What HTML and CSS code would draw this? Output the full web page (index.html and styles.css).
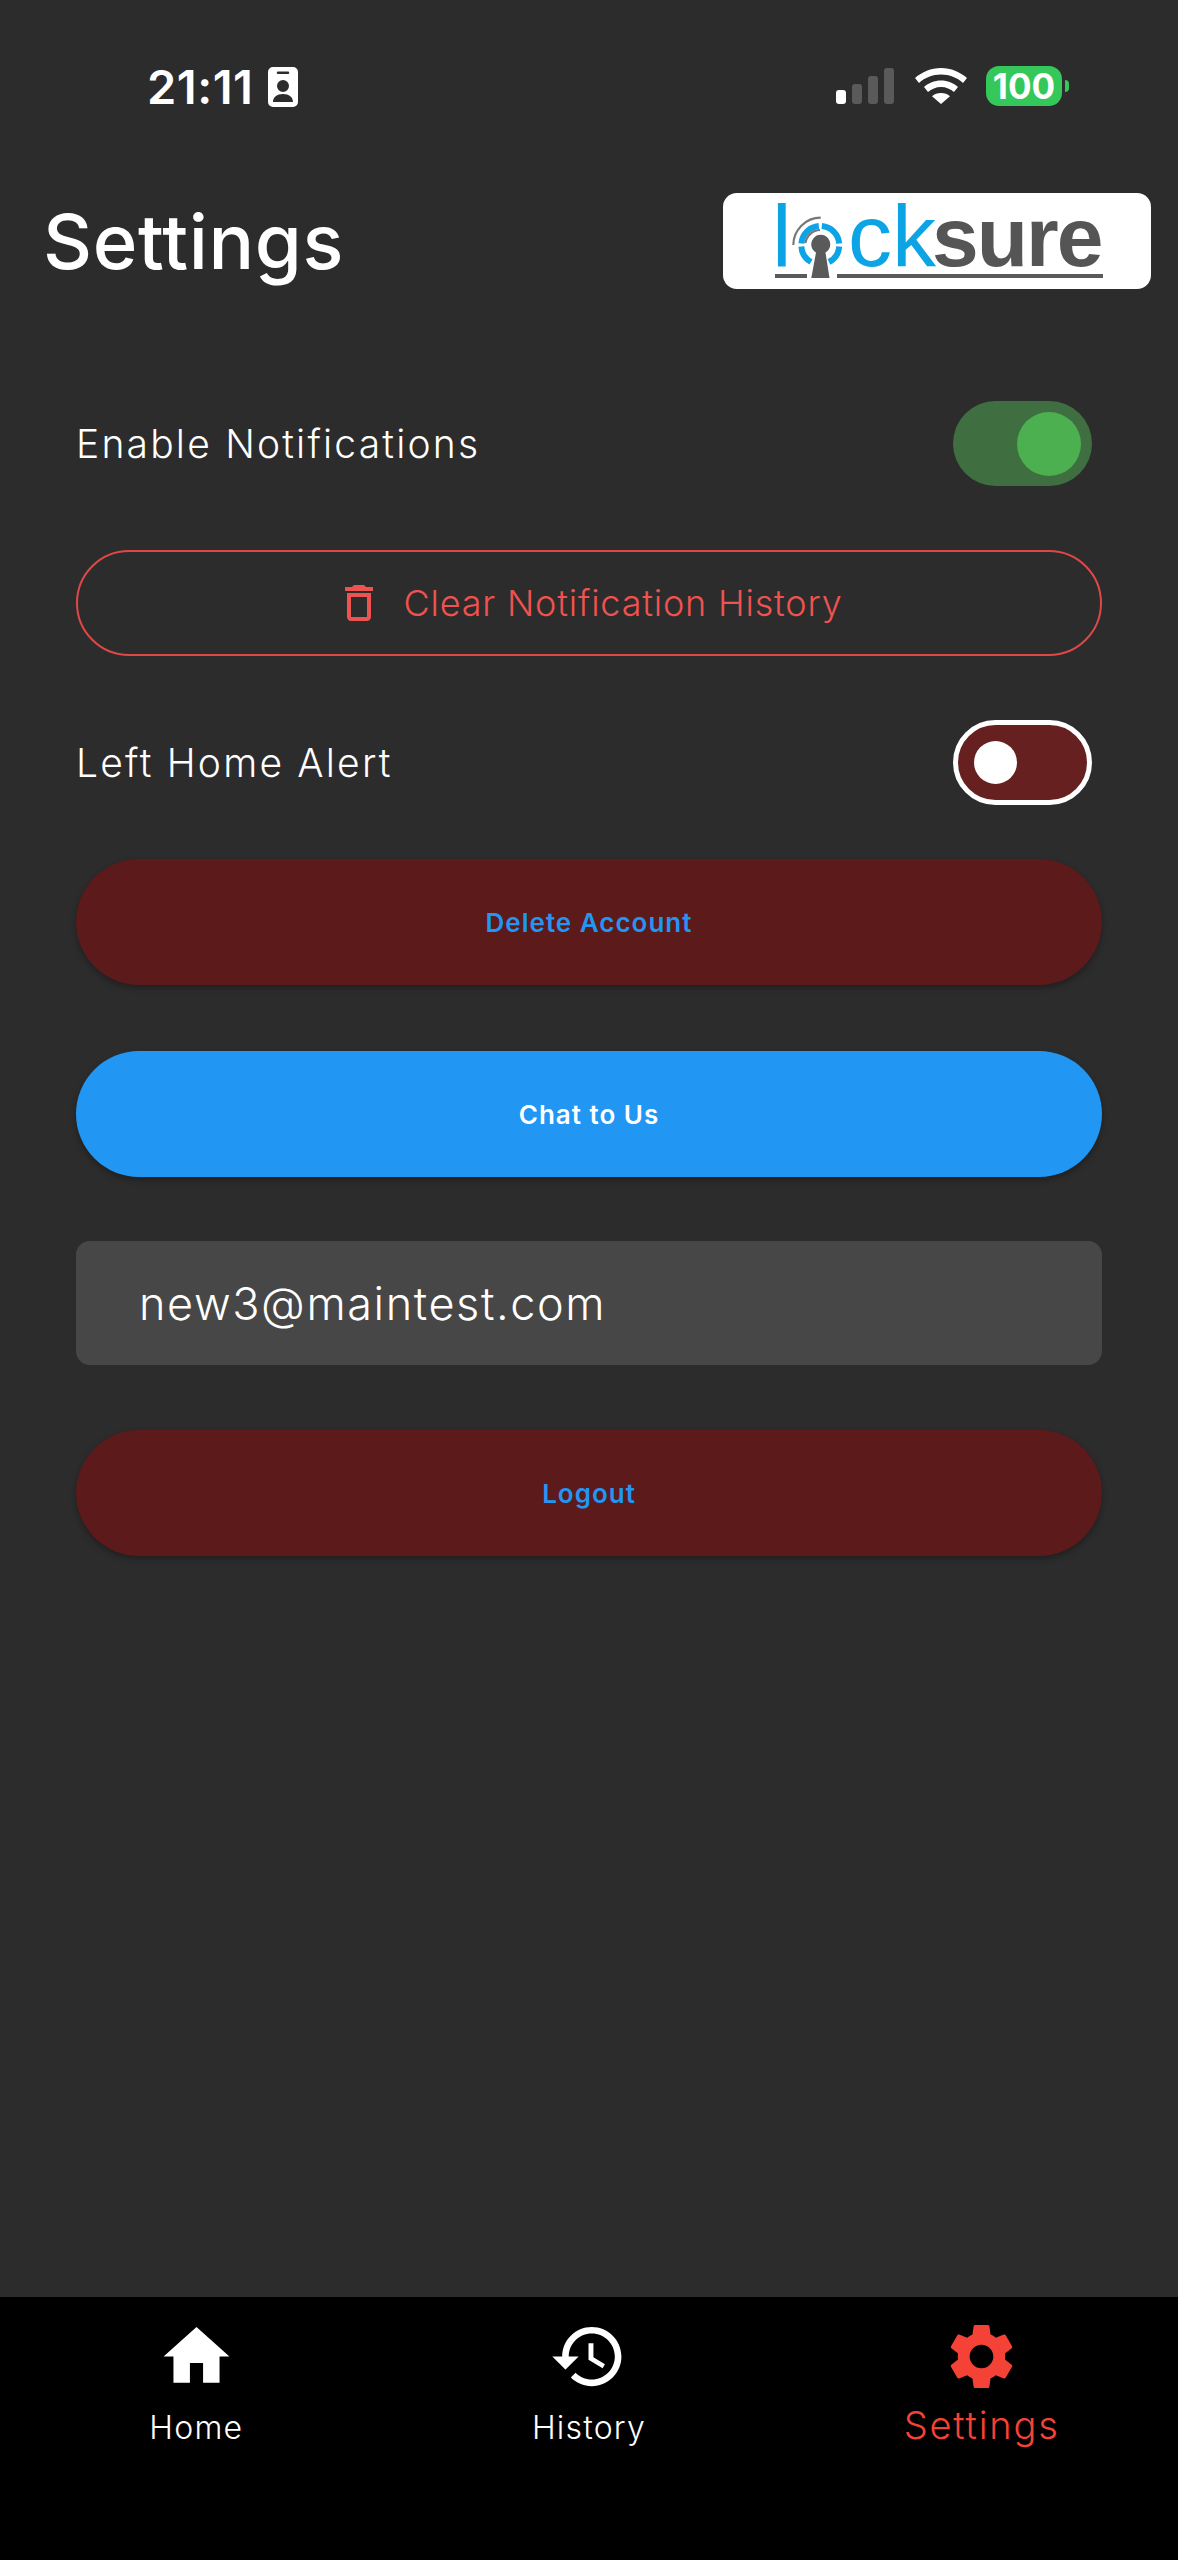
FILE: index.html
```html
<!DOCTYPE html>
<html>
	<head>
		<meta charset="utf-8">
		<meta name="viewport" content="width=device-width">
		<title>Settings</title>
		<link rel="stylesheet" href="styles.css">
	</head>
	<body>
		<div class="status">
			<div class="status_left">
				<span class="time">21:11</span>
				<svg class="badge" viewBox="0 0 30 40"><path fill="#FFF" fill-rule="evenodd" d="M5 0h20a5 5 0 0 1 5 5v30a5 5 0 0 1-5 5H5a5 5 0 0 1-5-5V5a5 5 0 0 1 5-5zM10 4.500a1 1 0 0 0 0 2.500h10a1 1 0 0 0 0-2.500zM15 13a6 6 0 1 0 0 12a6 6 0 0 0 0-12zM5 35h20c0-5-4-8-10-8s-10 3-10 8z"/></svg>
			</div>
			<div class="status_right">
				<div class="signal">
					<span class="bar bar1"></span><span class="bar bar2"></span><span class="bar bar3"></span><span class="bar bar4"></span>
				</div>
				<svg class="wifi" viewBox="0 0 52 36"><path fill="#FFF" d="M26 0c10 0 19 4 26 10l-4 5C42 9.500 34.500 6.500 26 6.500S10 9.500 4 15l-4-5C7 4 16 0 26 0zM26 12.500c6.500 0 12.500 2.500 17 6.500l-4 5c-3.500-3-8-5-13-5s-9.500 2-13 5l-4-5c4.500-4 10.500-6.500 17-6.500zM26 25c3.500 0 6.500 1.200 9 3.200L26 36l-9-7.800c2.500-2 5.500-3.200 9-3.200z"/></svg>
				<div class="battery"><span class="battery_level">100</span><span class="battery_nub"></span></div>
			</div>
		</div>

		<div class="header">
			<h1 class="title">Settings</h1>
			<div class="logo">
				<svg viewBox="0 0 428 96" width="428" height="96">
					<text class="logo_blue" x="49" y="73">l</text>
					<text class="logo_blue" x="125" y="73">ck</text>
					<text class="logo_grey" x="209" y="73">sure</text>
					<rect x="52" y="81" width="32" height="4" fill="#5A5A5A"/>
					<rect x="114" y="81" width="266" height="4" fill="#5A5A5A"/>
					<g fill="none" stroke="#0CA4E4" stroke-width="6">
						<path d="M78.400 50.500A19 19 0 0 1 95.800 33.100"/>
						<path d="M98.800 33.100A19 19 0 0 1 116.200 50.500"/>
						<path d="M116.200 53.500A19 19 0 0 1 106 69"/>
						<path d="M78.400 53.500A19 19 0 0 0 88 69"/>
					</g>
					<g fill="none" stroke="#777" stroke-width="2.200">
						<path d="M70.300 52A27.500 27.500 0 0 1 97.700 24.700"/>
						<path d="M82.500 50A15 15 0 0 1 97 37"/>
					</g>
					<path fill="#5A5A5A" d="M88.300 85L93 59.500A9.500 9.500 0 1 1 102.500 59.500L106.500 85z"/>
				</svg>
			</div>
		</div>

		<div class="content">
			<div class="row">
				<span class="row_label">Enable Notifications</span>
				<div class="toggle toggle_on"><span class="knob"></span></div>
			</div>
			<div class="btn_clear">
				<svg class="trash" viewBox="0 0 24 24"><path fill="#EF5350" d="M6 19c0 1.100.9 2 2 2h8c1.100 0 2-.9 2-2V7H6v12zM8 9h8v10H8V9zm7.500-5l-1-1h-5l-1 1H5v2h14V4z"/></svg>
				<span>Clear Notification History</span>
			</div>
			<div class="row">
				<span class="row_label">Left Home Alert</span>
				<div class="toggle toggle_off"><span class="knob"></span></div>
			</div>
			<div class="btn btn_red btn_delete">Delete Account</div>
			<div class="btn btn_blue">Chat to Us</div>
			<div class="email">new3@maintest.com</div>
			<div class="btn btn_red btn_logout">Logout</div>
		</div>

		<div class="nav">
			<div class="nav_item">
				<svg class="nav_icon" viewBox="0 0 24 24"><path fill="#FFF" d="M10 20v-6h4v6h5v-8h3L12 3 2 12h3v8z"/></svg>
				<span>Home</span>
			</div>
			<div class="nav_item">
				<svg class="nav_icon" viewBox="0 0 24 24"><path fill="#FFF" d="M13 3c-4.970 0-9 4.030-9 9H1l3.890 3.890.07.14L9 12H6c0-3.870 3.130-7 7-7s7 3.130 7 7-3.130 7-7 7c-1.930 0-3.680-.79-4.940-2.060l-1.420 1.420C8.270 19.990 10.510 21 13 21c4.970 0 9-4.030 9-9s-4.030-9-9-9zm-1 5v5l4.280 2.540.72-1.210-3.500-2.080V8H12z"/></svg>
				<span>History</span>
			</div>
			<div class="nav_item nav_active">
				<svg class="nav_icon" viewBox="0 0 24 24"><path fill="#F44336" d="M19.140 12.940c.04-.3.06-.61.06-.94 0-.32-.02-.64-.07-.94l2.030-1.580c.18-.14.23-.41.12-.61l-1.920-3.320c-.12-.22-.37-.29-.59-.22l-2.390.96c-.5-.38-1.030-.7-1.620-.94l-.36-2.540c-.04-.24-.24-.41-.48-.41h-3.840c-.24 0-.43.17-.47.41l-.36 2.540c-.59.24-1.130.57-1.620.94l-2.390-.96c-.22-.08-.47 0-.59.22L2.740 8.870c-.12.21-.08.47.12.61l2.030 1.580c-.05.3-.09.63-.09.94s.02.64.07.94l-2.030 1.580c-.18.14-.23.41-.12.61l1.920 3.320c.12.22.37.29.59.22l2.390-.96c.5.38 1.030.7 1.620.94l.36 2.540c.05.24.24.41.48.41h3.840c.24 0 .44-.17.47-.41l.36-2.540c.59-.24 1.130-.56 1.620-.94l2.390.96c.22.08.47 0 .59-.22l1.920-3.320c.12-.22.07-.47-.12-.61l-2.010-1.580zM12 15.600c-1.980 0-3.600-1.620-3.600-3.600s1.620-3.600 3.600-3.600 3.600 1.620 3.600 3.600-1.620 3.600-3.600 3.600z"/></svg>
				<span>Settings</span>
			</div>
		</div>
	</body>
</html>
```
FILE: styles.css
```css
*{
	box-sizing:border-box;
}

body{
	margin:0;
	height:2560px;
	display:flex;
	flex-direction:column;
	background:#2C2C2C;
	color:#FFF;
	font-family:"Inter",sans-serif;
}

/* status bar */
.status{
	height:130px;
	padding:58px 109px 0 147px;
	display:flex;
	justify-content:space-between;
	align-items:flex-start;
}

.status_left{
	display:flex;
	align-items:center;
	height:60px;
	margin-top:-1px;
}

.time{
	font-size:47px;
	font-weight:600;
	letter-spacing:.5px;
	line-height:60px;
	width:121px;
}

.badge{
	width:30px;
	height:40px;
}

.status_right{
	display:flex;
	align-items:center;
	height:60px;
	margin-top:-2px;
}

.signal{
	display:flex;
	align-items:flex-end;
	gap:6px;
	height:36px;
	width:79px;
}

.bar{
	width:10px;
	border-radius:3px;
	background:#5A5A5A;
}

.bar1{
	height:14px;
	background:#FFF;
}

.bar2{
	height:20px;
}

.bar3{
	height:28px;
}

.bar4{
	height:36px;
}

.wifi{
	width:52px;
	height:36px;
	margin-right:19px;
}

.battery{
	display:flex;
	align-items:center;
}

.battery_level{
	width:76px;
	height:40px;
	border-radius:13px;
	background:#34C759;
	font-size:35px;
	font-weight:700;
	line-height:40px;
	text-align:center;
}

.battery_nub{
	width:4px;
	height:12px;
	margin-left:3px;
	border-radius:0 4px 4px 0;
	background:#34C759;
}

/* header */
.header{
	margin-top:63px;
	height:96px;
	padding:0 27px 0 43px;
	display:flex;
	justify-content:space-between;
	align-items:center;
}

.title{
	margin:0;
	font-size:76px;
	font-weight:500;
	letter-spacing:.6px;
}

.logo{
	width:428px;
	height:96px;
	border-radius:14px;
	background:#FFF;
}

.logo svg{
	display:block;
	overflow:visible;
}

.logo_blue{
	font-family:"Liberation Sans",sans-serif;
	font-size:88px;
	fill:#0CA4E4;
}

.logo_grey{
	font-family:"Liberation Sans",sans-serif;
	font-size:84px;
	font-weight:700;
	letter-spacing:-2px;
	fill:#555;
}

/* settings */
.content{
	margin-top:112px;
	padding:0 76px;
	display:flex;
	flex-direction:column;
	gap:64px;
}

.row{
	display:flex;
	justify-content:space-between;
	align-items:center;
	height:85px;
	padding-right:10px;
}

.row_label{
	font-size:39px;
	font-weight:300;
	letter-spacing:2.200px;
}

.toggle{
	width:139px;
	height:85px;
	border-radius:43px;
	display:flex;
	align-items:center;
}

.toggle_on{
	background:#3F6F40;
	justify-content:flex-end;
	padding-right:11px;
}

.toggle_on .knob{
	width:64px;
	height:64px;
	border-radius:50%;
	background:#4CAF50;
}

.toggle_off{
	background:#662020;
	border:5px solid #FFF;
	padding-left:16px;
}

.toggle_off .knob{
	width:43px;
	height:43px;
	border-radius:50%;
	background:#FFF;
}

.btn_clear{
	height:106px;
	border:2px solid #E04848;
	border-radius:53px;
	display:flex;
	justify-content:center;
	align-items:center;
	gap:20px;
	color:#EF5350;
	font-size:36px;
	font-weight:300;
	letter-spacing:.8px;
}

.trash{
	width:48px;
	height:48px;
}

.btn{
	height:126px;
	border-radius:63px;
	display:flex;
	justify-content:center;
	align-items:center;
	font-size:26px;
	font-weight:600;
	letter-spacing:1px;
	box-shadow:0 3px 6px rgba(0,0,0,.3);
}

.btn_delete{
	margin-top:-10px;
}

.btn_logout{
	margin-top:1px;
}

.btn_red{
	background:#5C1A1A;
	color:#2196F3;
}

.btn_blue{
	margin-top:2px;
	background:#2196F3;
	color:#FFF;
}

.email{
	height:124px;
	padding-left:63px;
	display:flex;
	align-items:center;
	border-radius:14px;
	background:#474747;
	font-size:45px;
	font-weight:300;
	letter-spacing:1.600px;
}

/* bottom nav */
.nav{
	margin-top:auto;
	height:263px;
	padding-top:20px;
	display:grid;
	grid-template-columns:repeat(3,1fr);
	background:#000;
}

.nav_item{
	display:flex;
	flex-direction:column;
	align-items:center;
	font-size:32px;
	font-weight:300;
	letter-spacing:1.200px;
	line-height:44px;
}

.nav_icon{
	width:79px;
	height:79px;
	margin-bottom:10px;
}

.nav_active{
	color:#F44336;
	font-size:38px;
	letter-spacing:1.800px;
}

.nav_active .nav_icon{
	margin-bottom:7px;
}
```
